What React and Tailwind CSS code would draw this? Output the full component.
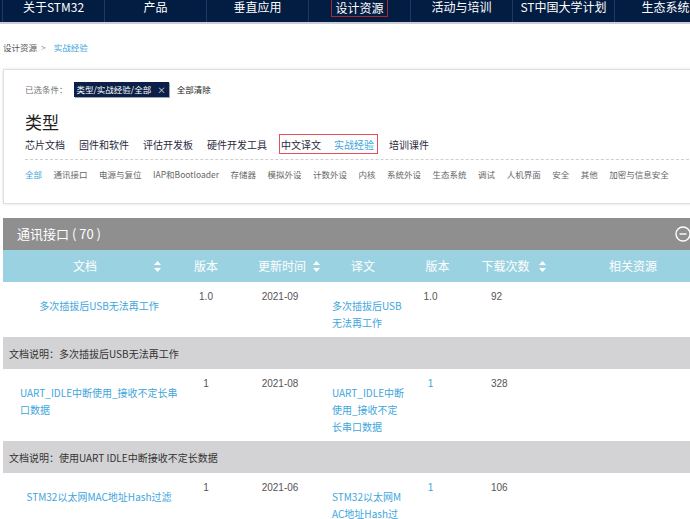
import React from "react";

const cjk = "font-['Noto_Sans_CJK_SC',sans-serif]";
const num = "font-['Liberation_Sans','Noto_Sans_CJK_SC',sans-serif]";

const navItems = ["关于STM32", "产品", "垂直应用", "设计资源", "活动与培训", "ST中国大学计划", "生态系统"];

const categories = ["芯片文档", "固件和软件", "评估开发板", "硬件开发工具"];

const subCategories = [
  "通讯接口", "电源与复位", "IAP和Bootloader", "存储器", "模拟外设", "计数外设", "内核",
  "系统外设", "生态系统", "调试", "人机界面", "安全", "其他", "加密与信息安全",
];

const rows = [
  {
    doc: "多次插拔后USB无法再工作", ver: "1.0", date: "2021-09",
    tr: "多次插拔后USB无法再工作", tver: "1.0", dl: "92",
    desc: "文档说明：多次插拔后USB无法再工作",
  },
  {
    doc: "UART_IDLE中断使用_接收不定长串口数据", ver: "1", date: "2021-08",
    tr: "UART_IDLE中断使用_接收不定长串口数据", tver: "1", dl: "328",
    desc: "文档说明：使用UART IDLE中断接收不定长数据",
  },
  {
    doc: "STM32以太网MAC地址Hash过滤", ver: "1", date: "2021-06",
    tr: "STM32以太网MAC地址Hash过滤", tver: "1", dl: "106",
    desc: "文档说明：STM32以太网MAC地址Hash过滤",
  },
];

const SortIcon = () => (
  <svg width="7" height="11" viewBox="0 0 7 11" fill="white">
    <path d="M3.5 0 L7 4 H0 Z" />
    <path d="M0 7 H7 L3.5 11 Z" />
  </svg>
);

export default function App() {
  return (
    <div className={`w-[690px] h-[519px] overflow-hidden bg-white ${cjk}`}>
      <div className="w-[700px]">
        {/* NAV */}
        <div className="h-[24px] bg-[#031c42] border-b-2 border-[#c9ced6] flex pl-[2px]">
          {navItems.map((item) => (
            <div key={item} className="w-[102px] shrink-0 border-l border-[#1f3863] flex justify-center items-start">
              {item === "设计资源" ? (
                <span className="text-white text-[12px] leading-[14px] pt-[1px] pb-[1px] px-[3px] border-x border-b border-[#a8282f]">
                  {item}
                </span>
              ) : (
                <span className="text-white text-[12px] leading-[14px]">{item}</span>
              )}
            </div>
          ))}
        </div>

        {/* BREADCRUMB */}
        <div className="mt-[17px] pl-[3px] flex items-center text-[8.5px] leading-[12px]">
          <span className="text-[#555]">设计资源</span>
          <span className="text-[#999] ml-[4px]">&gt;</span>
          <span className="text-[#3ea6dc] ml-[8px]">实战经验</span>
        </div>

        {/* FILTER CARD */}
        <div className="mt-[16px] ml-[3px] border border-[#e0e0e0] shadow-[0_0_3px_rgba(0,0,0,0.12)] pl-[21px] pt-[12px] pb-[23px]">
          <div className="flex items-center h-[15px] text-[8.5px]">
            <span className="text-[#777]">已选条件：</span>
            <span className="ml-[6px] h-[15px] bg-[#0b1f47] text-white px-[3px] flex items-center shadow-[1px_1px_0_#9aa6b8]">
              类型/实战经验/全部<span className="ml-[6px] text-[#cfd6e2]">×</span>
            </span>
            <span className="ml-[8px] text-[#222]">全部清除</span>
          </div>

          <div className="mt-[15px] text-[17px] leading-[20px] text-[#222]">类型</div>

          <div className="mt-[2px] h-[20px] flex items-center text-[10px] text-[#2a2a3a]">
            {categories.map((c) => (
              <span key={c} className="mr-[14px]">{c}</span>
            ))}
            <span className="h-[20px] flex items-center border border-[#e4505a] px-[1px] -ml-[2px]">
              <span>中文译文</span>
              <span className="ml-[13px] text-[#3ea6dc]">实战经验</span>
              <span className="w-[2px]" />
            </span>
            <span className="ml-[11px]">培训课件</span>
          </div>

          <div className="mt-[5px] border-t border-dashed border-[#cfcfcf]" />

          <div className="mt-[8px] flex items-center gap-[11.5px] text-[8.5px] leading-[12px] text-[#666] whitespace-nowrap">
            <span className="text-[#3ea6dc]">全部</span>
            {subCategories.map((s) => (
              <span key={s}>{s}</span>
            ))}
          </div>
        </div>

        {/* TABLE TITLE */}
        <div className="mt-[14px] ml-[3px] h-[32px] bg-[#8f8f8f] flex items-center justify-between pl-[14px] pr-[9px]">
          <span className="text-white text-[13px] whitespace-pre">通讯接口 ( 70 )</span>
          <svg width="16" height="16" viewBox="0 0 16 16" fill="none" stroke="white" strokeWidth="1.4">
            <circle cx="8" cy="8" r="7" />
            <path d="M4.5 8 H11.5" />
          </svg>
        </div>

        {/* TABLE */}
        <table className="ml-[3px] table-fixed border-collapse w-[697px]">
          <colgroup>
            <col className="w-[177px]" />
            <col className="w-[52px]" />
            <col className="w-[96px]" />
            <col className="w-[82px]" />
            <col className="w-[55px]" />
            <col className="w-[110px]" />
            <col className="w-[125px]" />
          </colgroup>
          <thead>
            <tr className="h-[32px] bg-[#9bd2e1] text-white text-[12px] font-normal">
              <th className="font-normal p-0">
                <div className="flex items-center pl-[13px] pr-[19px]">
                  <span className="flex-1 text-center">文档</span>
                  <SortIcon />
                </div>
              </th>
              <th className="font-normal p-0 text-center">版本</th>
              <th className="font-normal p-0">
                <div className="flex items-center justify-center gap-[7px] pl-[18px]">
                  <span>更新时间</span>
                  <SortIcon />
                </div>
              </th>
              <th className="font-normal p-0 text-center pr-[12px]">译文</th>
              <th className="font-normal p-0 text-center">版本</th>
              <th className="font-normal p-0">
                <div className="flex items-center justify-center gap-[9px] pr-[13px]">
                  <span>下载次数</span>
                  <SortIcon />
                </div>
              </th>
              <th className="font-normal p-0 text-center pr-[9px]">相关资源</th>
            </tr>
          </thead>
          <tbody>
            {rows.map((r) => (
              <React.Fragment key={r.date}>
                <tr className="bg-white align-top">
                  <td className="pt-[15px] pb-[6px] pl-[17px] pr-[2px] text-center text-[10px] leading-[17px]">
                    <span className="inline-block text-left text-[#3ea6dc]">{r.doc}</span>
                  </td>
                  <td className={`pt-[6px] text-center text-[10px] leading-[17px] text-[#555] ${num}`}>{r.ver}</td>
                  <td className={`pt-[6px] text-center text-[10px] leading-[17px] text-[#555] ${num}`}>{r.date}</td>
                  <td className="pt-[15px] pb-[6px] pl-[4px] pr-[4px] text-left text-[10px] leading-[17px] text-[#3ea6dc] break-all">
                    {r.tr}
                  </td>
                  <td className={`pt-[6px] pr-[14px] text-center text-[10px] leading-[17px] text-[#3ea6dc] ${num}`}>
                    <span className={r.tver === "1.0" ? "text-[#555]" : ""}>{r.tver}</span>
                  </td>
                  <td className={`pt-[6px] pl-[26px] text-left text-[10px] leading-[17px] text-[#555] ${num}`}>{r.dl}</td>
                  <td />
                </tr>
                <tr className="h-[32px] bg-[#d3d3d5]">
                  <td colSpan={7} className="pl-[6px] text-[10px] text-[#333]">{r.desc}</td>
                </tr>
              </React.Fragment>
            ))}
          </tbody>
        </table>
      </div>
    </div>
  );
}
